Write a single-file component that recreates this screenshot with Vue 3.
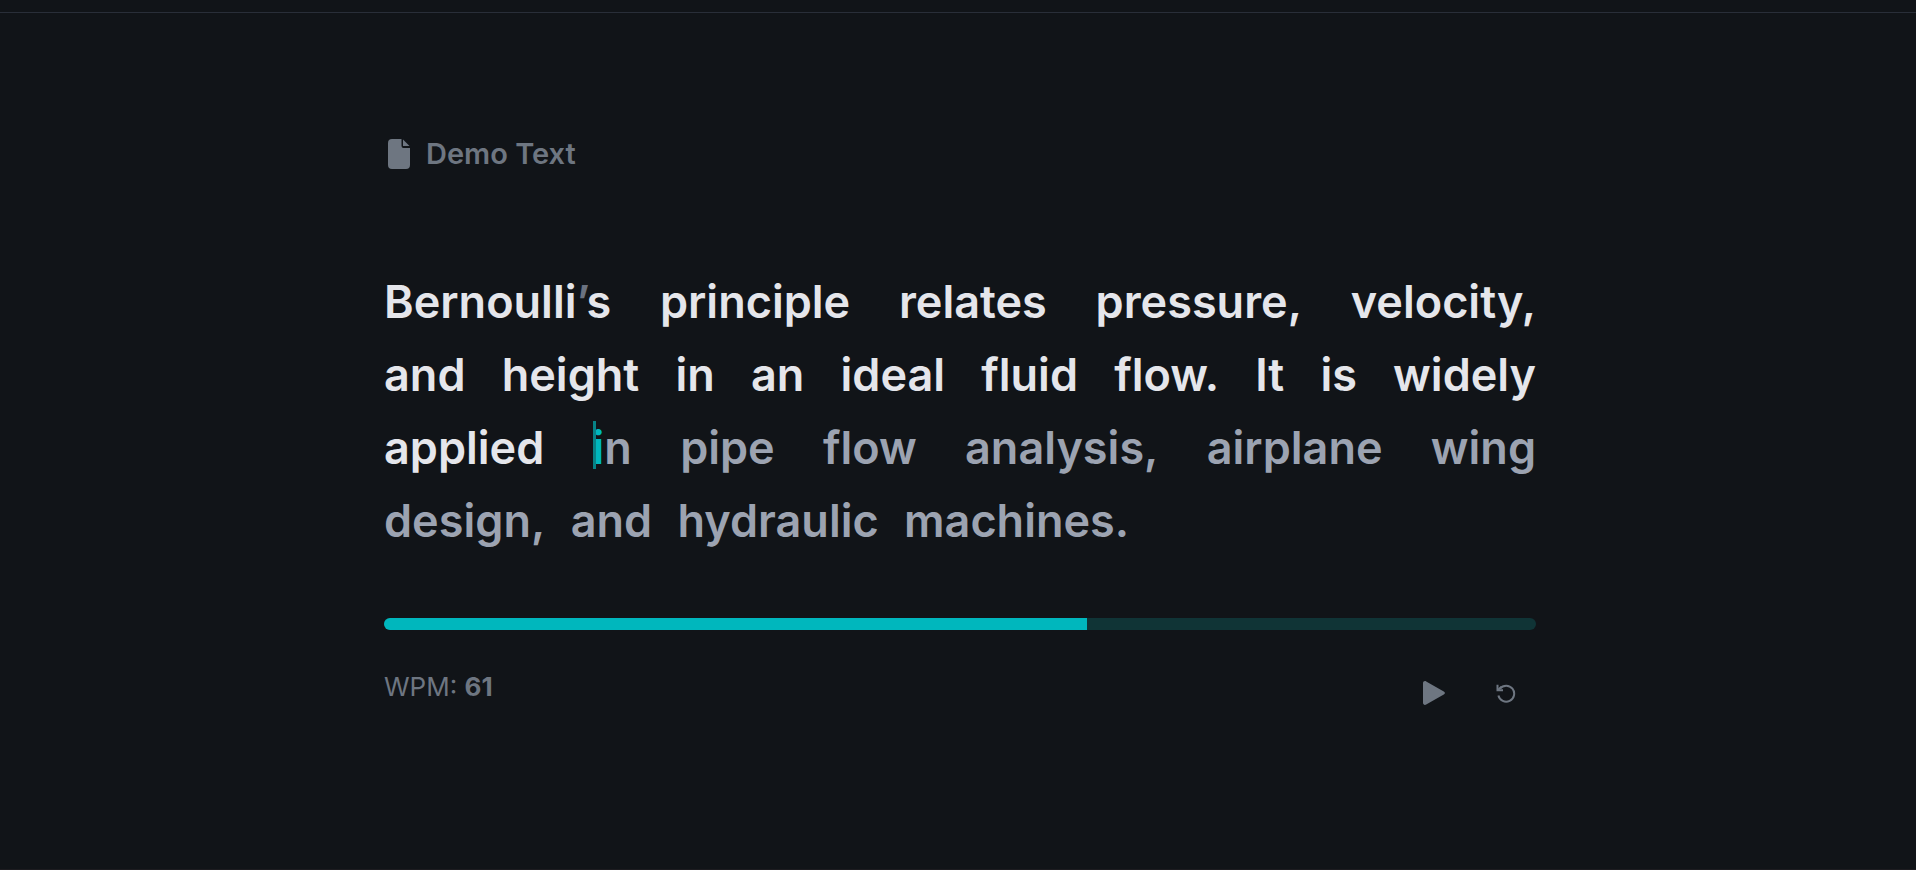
<script setup>
import { computed, ref } from 'vue'

const text =
  'Bernoulli’s principle relates pressure, velocity, and height in an ideal fluid flow. It is widely applied in pipe flow analysis, airplane wing design, and hydraulic machines.'
const cursor = ref(text.indexOf('in pipe'))
const wpm = ref(61)
const progress = ref(61)

const words = computed(() => {
  let index = 0
  return text.split(' ').map((word) => {
    const chars = [...word].map((char) => {
      const i = index++
      let state = 'pending'
      if (i === cursor.value) state = 'current'
      else if (char === '’') state = 'skipped'
      else if (i < cursor.value) state = 'typed'
      return { char, state, i }
    })
    index++
    return chars
  })
})

function restart() {
  cursor.value = 0
  progress.value = 0
}
</script>

<template>
  <div class="page">
    <header class="topbar"></header>
    <main class="content">
      <h1 class="title">
        <svg class="file" viewBox="0 0 22 30" aria-hidden="true">
          <path d="M4 0h9.500v7a2 2 0 0 0 2 2H22v17a4 4 0 0 1-4 4H4a4 4 0 0 1-4-4V4a4 4 0 0 1 4-4z" />
          <path d="M15 0.500l6.500 6.500H15z" />
        </svg>
        <span>Demo Text</span>
      </h1>

      <p class="passage">
        <template v-for="(word, w) in words" :key="w"
          ><span class="word"
            ><span v-for="c in word" :key="c.i" :class="c.state">{{ c.char }}</span></span
          >{{ ' ' }}</template
        >
      </p>

      <div class="track" role="progressbar" aria-label="Progress" :aria-valuenow="progress">
        <div class="fill" :style="{ width: progress + '%' }"></div>
      </div>

      <div class="footer">
        <div class="wpm">WPM: <strong>{{ wpm }}</strong></div>
        <div class="controls">
          <button type="button" aria-label="Play">
            <svg class="play" viewBox="0 0 22 24" aria-hidden="true">
              <path d="M0 2.200C0 .4 1.700-.5 3.200.4l17.600 10c1.500.8 1.500 2.400 0 3.200l-17.600 10C1.700 24.500 0 23.600 0 21.800z" />
            </svg>
          </button>
          <button type="button" aria-label="Restart" @click="restart">
            <svg class="reset" viewBox="0 0 20 20" aria-hidden="true">
              <path d="M4 5.600A8 8 0 1 1 2.400 12.600" />
              <path d="M1.500 1.800v5.400H7" />
              <path d="M1.500 7.200L5.500 3.800" />
            </svg>
          </button>
        </div>
      </div>
    </main>
  </div>
</template>

<style>
body {
  margin: 0;
  background: #111418;
}
</style>

<style scoped>
.page {
  box-sizing: border-box;
  min-height: 100vh;
  padding-left: 4px;
  background: #111418;
  border-bottom: 1px solid #1d1c20;
  color: #6e7681;
  font-family: Inter, 'Liberation Sans', sans-serif;
}
.topbar {
  height: 12px;
  margin-left: -4px;
  border-bottom: 1px solid #292e38;
}
.content {
  max-width: 1152px;
  margin: 0 auto;
  padding: 121px 0 48px;
}
.title {
  display: flex;
  align-items: center;
  gap: 16px;
  margin: 0 0 91px;
  padding-left: 4px;
  font-size: 29px;
  line-height: 40px;
  font-weight: 600;
}
.file {
  width: 22px;
  height: 30px;
  fill: currentColor;
}
.passage {
  margin: 0 0 61px -14px;
  font-size: 45px;
  line-height: 73px;
  font-weight: 600;
  text-align: justify;
}
.word {
  display: inline-block;
  margin-left: 14px;
  text-align: left;
}
.typed {
  color: #e5e6eb;
}
.skipped {
  color: #6b7280;
}
.pending {
  color: #9ca3b1;
}
.current {
  position: relative;
  color: #00b7bd;
}
.current::before {
  content: '';
  position: absolute;
  left: 0;
  top: 1px;
  width: 3px;
  height: 48px;
  background: #078286;
}
.track {
  height: 12px;
  overflow: hidden;
  border-radius: 6px;
  background: #103436;
}
.fill {
  height: 100%;
  background: #00b7bd;
}
.footer {
  display: flex;
  justify-content: space-between;
  align-items: flex-start;
  padding-top: 38px;
}
.wpm {
  font-size: 26px;
  line-height: 38px;
}
.controls {
  display: flex;
  gap: 24px;
  padding: 3px 6px 0 0;
}
button {
  display: grid;
  place-items: center;
  width: 48px;
  height: 44px;
  padding: 0;
  border: 0;
  background: none;
  color: inherit;
  cursor: pointer;
}
.play {
  width: 22px;
  height: 24px;
  fill: currentColor;
}
.reset {
  width: 20px;
  height: 20px;
  fill: none;
  stroke: currentColor;
  stroke-width: 2;
}
</style>
